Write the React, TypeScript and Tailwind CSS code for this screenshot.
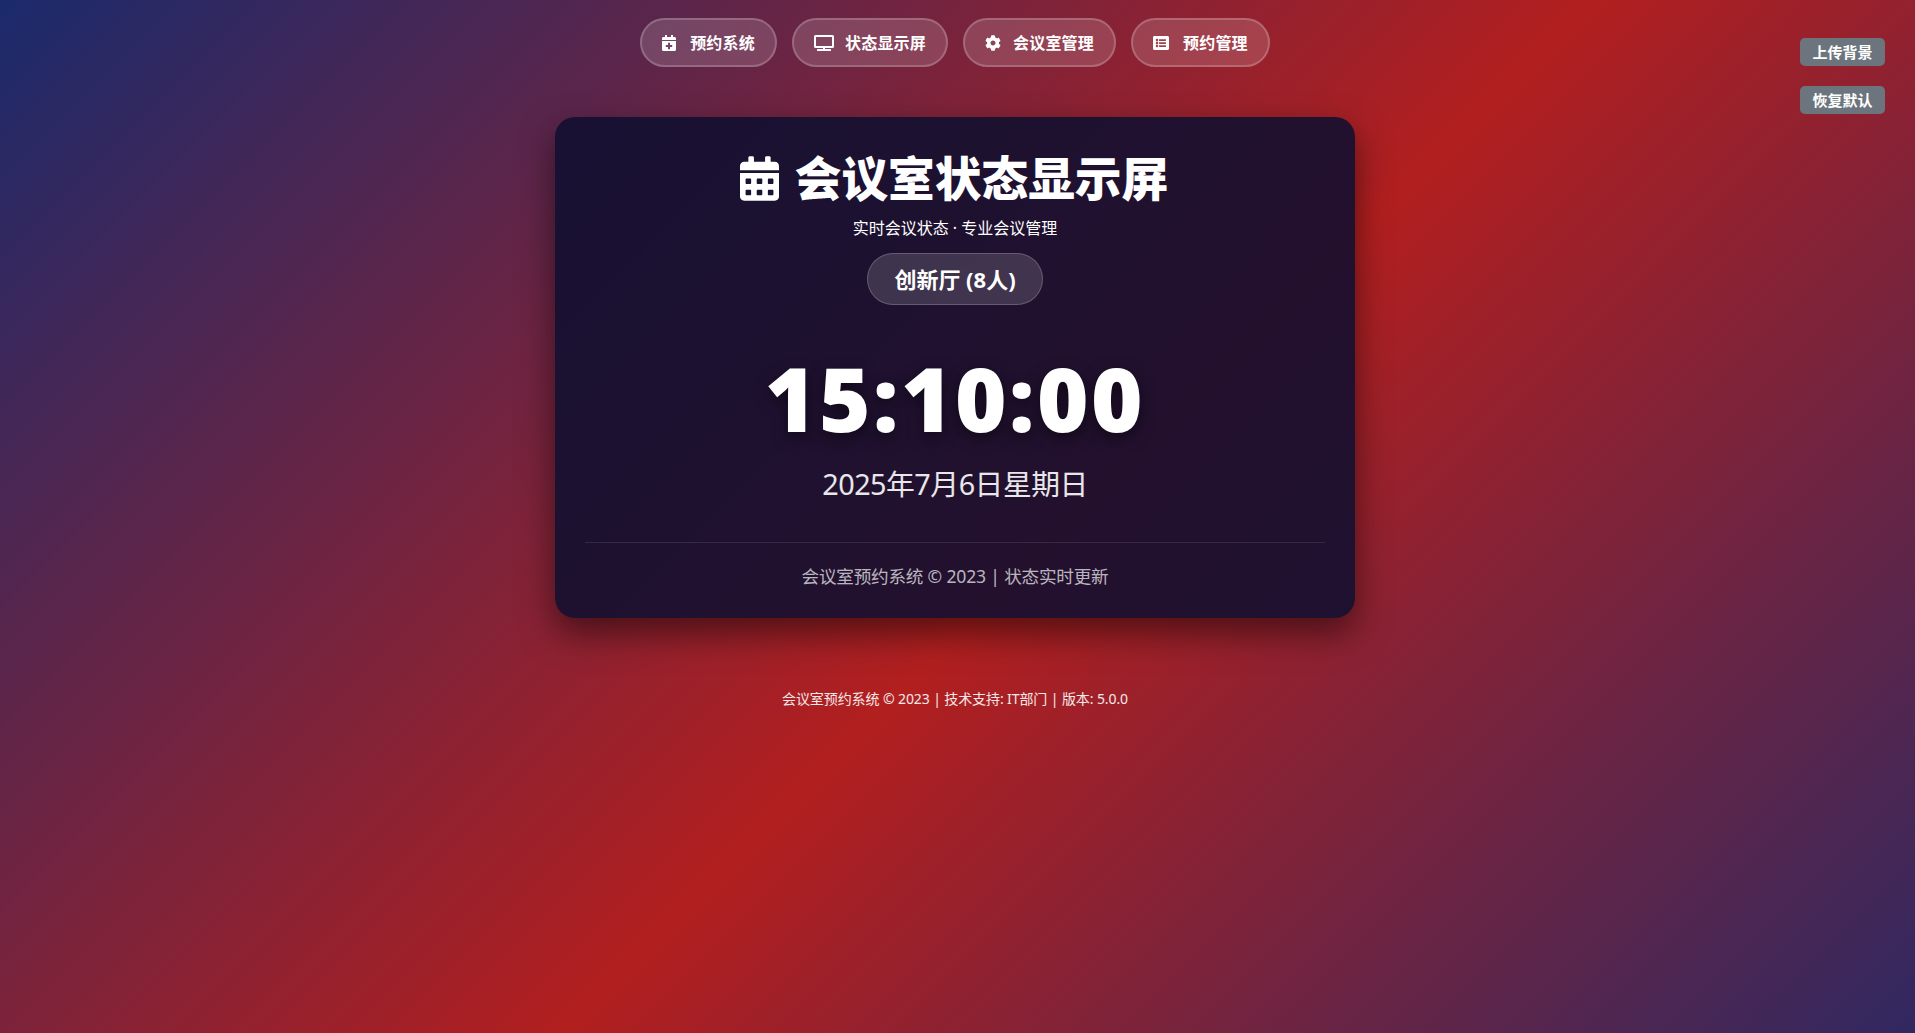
import { FaCalendarAlt, FaCalendarPlus, FaCog, FaListAlt, FaTv } from "react-icons/fa";

const nav = [
  { icon: <FaCalendarPlus className="w-[14px] h-4" />, label: "预约系统", gap: "gap-[14px]" },
  { icon: <FaTv className="w-5 h-4" />, label: "状态显示屏", gap: "gap-[11px]" },
  { icon: <FaCog className="w-4 h-4" />, label: "会议室管理", gap: "gap-[12px]" },
  { icon: <FaListAlt className="w-4 h-4" />, label: "预约管理", gap: "gap-[14px]" },
];

const sans = "font-['Noto_Sans','Noto_Sans_CJK_SC',sans-serif]";

export default function App() {
  return (
    <div className={`relative min-h-[1033px] w-full bg-[linear-gradient(135deg,#1a2a6c,#b21f1f_54%,#1a2a6c_108%)] pr-[5px] text-white ${sans}`}>
      <nav className="flex justify-center gap-[15px] pt-[18px]">
        {nav.map((n) => (
          <a key={n.label} className={`flex h-[49px] items-center ${n.gap} rounded-[25px] border-2 border-white/20 bg-white/15 px-5 text-[16px] font-bold tracking-[0.2px]`}>
            {n.icon}
            <span>{n.label}</span>
          </a>
        ))}
      </nav>
      <div className="absolute right-[30px] top-[38px] flex flex-col gap-[20px]">
        <button className="h-[28px] w-[85px] rounded-[5px] bg-[#6c757d] text-[15px] font-bold">上传背景</button>
        <button className="h-[28px] w-[85px] rounded-[5px] bg-[#6c757d] text-[15px] font-bold">恢复默认</button>
      </div>
      <main className="mx-auto mt-[50px] h-[501px] w-[800px] rounded-[20px] bg-[#0f0f30]/[0.88] px-[30px] pt-[32px] text-center shadow-[0_15px_35px_rgba(0,0,0,0.5)]">
        <h1 className="flex items-center justify-center gap-[16px] pr-[2px] text-[46.7px] font-black leading-[58px]">
          <FaCalendarAlt className="h-[45px] w-[39px]" />
          <span>会议室状态显示屏</span>
        </h1>
        <p className="mt-[9px] text-[16px] leading-[24px]">实时会议状态 · 专业会议管理</p>
        <div className="mt-[13px] flex justify-center">
          <div className="flex h-[52px] w-[176px] items-center justify-center rounded-[30px] border border-white/20 bg-white/15 text-[22px] font-bold">创新厅 (8人)</div>
        </div>
        <div className="mt-[40px] text-[88px] font-black leading-[106px] tracking-[2.5px] [text-shadow:0_5px_15px_rgba(0,0,0,0.5)]">15:10:00</div>
        <div className="mt-[13px] text-[28.8px] leading-[40px] tracking-[-0.5px] text-white/90">2025年7月6日星期日</div>
        <div className="mt-[38px] border-t border-white/10 pt-[20px] text-[17.6px] leading-[27px] tracking-[-0.2px] text-white/70">会议室预约系统 © 2023 | 状态实时更新</div>
      </main>
      <footer className="mt-[70px] text-center text-[14px] leading-[21px] tracking-[-0.1px] text-white/90">会议室预约系统 © 2023 | 技术支持: IT部门 | 版本: 5.0.0</footer>
    </div>
  );
}
